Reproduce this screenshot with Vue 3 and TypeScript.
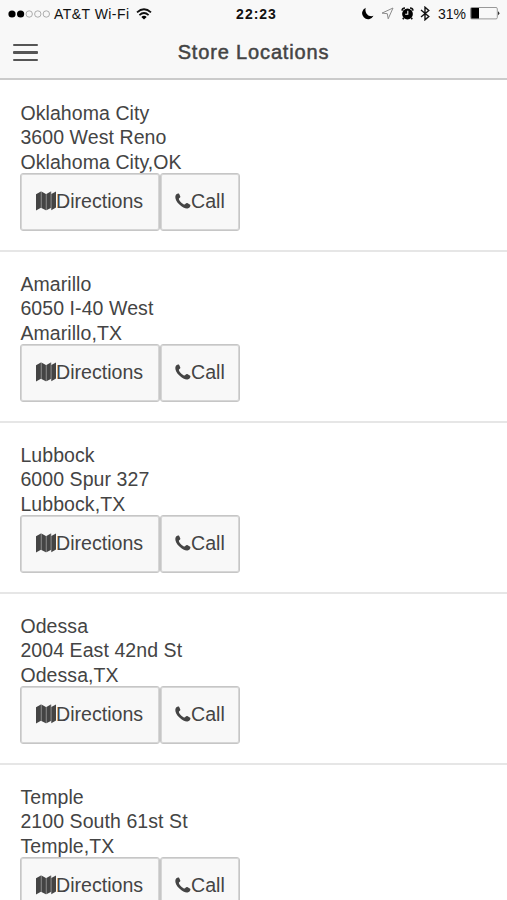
<script setup lang="ts">
interface Store {
  name: string
  street: string
  region: string
}

const stores: Store[] = [
  { name: 'Oklahoma City', street: '3600 West Reno', region: 'Oklahoma City,OK' },
  { name: 'Amarillo', street: '6050 I-40 West', region: 'Amarillo,TX' },
  { name: 'Lubbock', street: '6000 Spur 327', region: 'Lubbock,TX' },
  { name: 'Odessa', street: '2004 East 42nd St', region: 'Odessa,TX' },
  { name: 'Temple', street: '2100 South 61st St', region: 'Temple,TX' },
]
</script>

<template>
  <div class="screen">
    <header class="top">
      <div class="status">
        <div class="side">
          <svg class="signal" width="43" height="12" viewBox="0 0 43 12">
            <circle cx="4" cy="6" r="3.6" />
            <circle cx="12.6" cy="6" r="3.6" />
            <g fill="none" stroke="#999" stroke-width=".8">
              <circle cx="21.2" cy="6" r="3.2" />
              <circle cx="29.8" cy="6" r="3.2" />
              <circle cx="38.3" cy="6" r="3.2" />
            </g>
          </svg>
          <span class="carrier">AT&amp;T Wi-Fi</span>
          <svg class="wifi" width="16" height="12" viewBox="0 0 16 12">
            <g fill="none" stroke="#111" stroke-width="1.8">
              <path d="M1 4.4Q8-1.8 15 4.4" />
              <path d="M3.4 7.1Q8 3 12.6 7.1" />
            </g>
            <path d="M5.3 8.9Q8 6.8 10.7 8.9L8 11.6Z" />
          </svg>
        </div>
        <span class="clock">22:23</span>
        <div class="side right">
          <svg width="12" height="13" viewBox="0 0 12 13">
            <path d="M3.7.7A6 6 0 1 0 11.5 8.8C7 10.7 2.2 6.5 3.7.7Z" />
          </svg>
          <svg class="arrow" width="13" height="13" viewBox="0 0 13 13">
            <path d="M12 1L1 6.1L6.3 6.7L7.2 11.8Z" fill="none" stroke="#8c8c8c" />
          </svg>
          <svg class="alarm" width="13" height="13" viewBox="0 0 13 13">
            <circle cx="6.5" cy="7" r="5.4" />
            <path d="M1 3.6A3 3 0 0 1 4 1M12 3.6A3 3 0 0 0 9 1M2.8 10.8L1.8 12.3M10.2 10.8L11.2 12.3" fill="none" stroke="#111" stroke-width="1.6" />
            <path d="M6.8 3.8V7.2H4.2" fill="none" stroke="#f8f8f8" stroke-width="1.1" />
          </svg>
          <svg class="bluetooth" width="10" height="15" viewBox="0 0 10 15">
            <path d="M1 4L8.8 10.5L5 13.8V1.2L8.8 4.5L1 11" fill="none" stroke="#111" stroke-width="1.4" />
          </svg>
          <span class="percent">31%</span>
          <svg class="battery" width="30" height="13" viewBox="0 0 30 13">
            <rect x=".5" y=".5" width="26.8" height="11.4" rx="1.3" fill="none" stroke="#999" />
            <path d="M1.2 1H9V11.5H1.2Z" fill="#000" />
            <path d="M28 4.3Q30.8 6.2 28 8.2Z" fill="#333" />
          </svg>
        </div>
      </div>
      <nav class="bar">
        <button class="menu" aria-label="Menu"><i></i><i></i><i></i></button>
        <h1>Store Locations</h1>
      </nav>
    </header>
    <main>
      <section v-for="store in stores" :key="store.name" class="store">
        <p>{{ store.name }}</p>
        <p>{{ store.street }}</p>
        <p>{{ store.region }}</p>
        <div class="actions">
          <button class="btn directions">
            <svg width="20" height="20" viewBox="0 0 20 20">
              <path d="M0 3.2L4.9.6V16.8L0 19.5ZM5.4.6L9.9 3V19.2L5.4 16.9ZM10.4 3L14.8.6V16.9L10.4 19.2ZM15.3 3L20 .4V16.5L15.3 19.2Z" />
              <path d="M4.8.6H5.5V16.9H4.8ZM9.8 3H10.5V19.2H9.8ZM14.7.6H15.4V16.9H14.7Z" opacity=".45" />
            </svg><span>Directions</span>
          </button>
          <button class="btn call">
            <svg width="16" height="16" viewBox="0 0 16 16">
              <path d="M1.1 1.4Q2.7.1 3.9.5Q4.5 1.5 5.4 3.7Q5.5 4.4 3.9 5.6Q3.6 6.3 4.8 7.9Q6.7 10.4 8.9 11.5Q9.8 11.9 10.8 10.5Q11.6 9.6 12.3 10.1L15.2 11.7Q15.8 12.1 15.3 13.3Q14.7 15.1 12.5 15.4Q8.8 15.7 4.4 11.5Q.3 7.6.3 3.9Q.3 2.4 1.1 1.4Z" />
            </svg><span>Call</span>
          </button>
        </div>
      </section>
    </main>
  </div>
</template>

<style>
body {
  background: #fff;
  overflow: hidden;
}
</style>

<style scoped>
.screen {
  height: 900px;
  overflow: hidden;
  color: #444;
  font-family: "Liberation Sans", Arial, sans-serif;
}
.top {
  box-sizing: border-box;
  height: 80px;
  background: #f8f8f8;
  border-bottom: 2px solid #cbcbcb;
}
.status {
  display: grid;
  grid-template-columns: 1fr auto 1fr;
  align-items: center;
  height: 27px;
  padding: 0 7px 0 8px;
  color: #111;
  font-size: 14px;
}
.side {
  display: flex;
  align-items: center;
}
.right {
  justify-content: flex-end;
}
svg {
  display: block;
  flex: none;
}
.carrier {
  margin-left: 3px;
  font-size: 14px;
  letter-spacing: 0.45px;
  white-space: nowrap;
}
.wifi {
  margin-left: 6px;
}
.clock {
  padding-left: 5px;
  font-size: 14px;
  font-weight: 700;
  letter-spacing: 1px;
}
.arrow {
  margin-left: 7px;
}
.alarm {
  margin-left: 7px;
}
.bluetooth {
  margin-left: 6px;
}
.percent {
  margin-left: 8px;
  font-size: 14px;
}
.battery {
  margin-left: 4px;
}
.bar {
  display: grid;
  grid-template-columns: 52px 1fr 52px;
  align-items: center;
  height: 51px;
}
button {
  margin: 0;
  padding: 0;
  border: 0;
  background: none;
  color: inherit;
  font: inherit;
}
.menu {
  display: flex;
  flex-direction: column;
  gap: 5px;
  width: 25px;
  margin-left: 13px;
}
.menu i {
  height: 2.5px;
  background: #555;
  border-radius: 1px;
}
h1 {
  margin: 0;
  font-size: 20px;
  font-weight: 400;
  letter-spacing: 0.85px;
  text-align: center;
  -webkit-text-stroke: 0.5px #444;
}
.store {
  box-sizing: border-box;
  height: 171px;
  padding: 20px 20px 0;
  border-bottom: 2px solid #e6e6e6;
}
.store:first-child {
  height: 172px;
  padding-top: 21px;
}
p {
  margin: 0;
  padding-left: 0.4px;
  font-size: 19.5px;
  line-height: 24.4px;
  letter-spacing: 0.08px;
}
.actions {
  display: flex;
  margin-top: -1px;
}
.btn {
  box-sizing: border-box;
  display: flex;
  align-items: center;
  height: 58px;
  padding-bottom: 3px;
  border: 1px solid #c6c6c6;
  border-radius: 3px;
  background: #f8f8f8;
  box-shadow: inset 0 0 0 1px #d6d6d6;
  font-size: 19.6px;
}
.btn svg {
  fill: #444;
}
.btn span {
  padding-top: 1px;
}
.directions {
  width: 140px;
  padding-left: 15px;
}
.call {
  width: 80px;
  padding-left: 14px;
}
</style>
